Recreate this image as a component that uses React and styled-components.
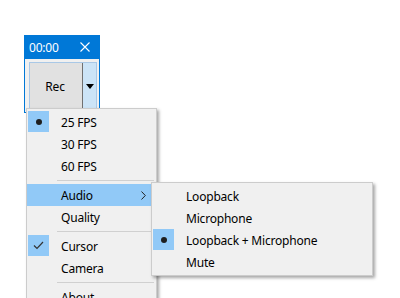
import React from 'react';
import styled, { createGlobalStyle } from 'styled-components';

const GlobalStyle = createGlobalStyle`
  html, body {
    margin: 0;
    background: #ffffff;
    font-family: 'Noto Sans', 'Liberation Sans', sans-serif;
    font-size: 12px;
    letter-spacing: -0.2px;
    color: #000;
  }
`;

const Page = styled.div`
  position: relative;
  height: 298px;
  overflow: hidden;
  padding: 35px 0 0 24px;
  box-sizing: border-box;
`;

const Window = styled.div`
  width: 76px;
`;

const TitleBar = styled.div`
  display: flex;
  align-items: center;
  justify-content: space-between;
  height: 24px;
  padding: 0 10px 0 5px;
  background: #0078d7;
  color: #fff;
  font-size: 12px;
`;

const WinBody = styled.div`
  border: 1px solid #0078d7;
  border-top: none;
  background: #f0f0f0;
  padding: 3px 2px 2px 4px;
`;

const SplitButton = styled.div`
  display: flex;
  height: 46px;
  border: 1px solid #a9c8e6;
`;

const RecButton = styled.div`
  flex: 1;
  display: flex;
  align-items: center;
  justify-content: center;
  padding-right: 2px;
  background: #e1e1e1;
  border-right: 1px solid #707070;
`;

const ArrowButton = styled.div`
  width: 13px;
  display: flex;
  align-items: center;
  justify-content: center;
  background: #cce4f7;
`;

const Menu = styled.div`
  position: absolute;
  left: ${p => p.$left}px;
  top: ${p => p.$top}px;
  width: ${p => p.$width}px;
  box-sizing: border-box;
  background: #f0f0f0;
  border: 1px solid #cccccc;
  padding: 2px 0;
  box-shadow: 2px 2px 3px rgba(0, 0, 0, 0.35);
`;

const Row = styled.div`
  position: relative;
  display: flex;
  align-items: center;
  height: 22px;
  background: ${p => (p.$hot ? '#91c9f7' : 'transparent')};
`;

const Gutter = styled.div`
  align-self: flex-start;
  width: 21px;
  height: 21px;
  margin: 0 12px 0 1px;
  display: flex;
  align-items: center;
  justify-content: center;
  background: ${p => (p.$on ? '#91c9f7' : 'transparent')};
`;

const Dot = styled.span`
  width: 6px;
  height: 6px;
  border-radius: 50%;
  background: #1e1e1e;
`;

const Label = styled.span`
  flex: 1;
  white-space: nowrap;
`;

const Chevron = styled.svg`
  margin-right: 10px;
`;

const Separator = styled.div`
  height: 1px;
  margin: 3px 2px 3px 30px;
  background: #d0d0d0;
`;

const CheckIcon = () => (
  <svg width="11" height="9" viewBox="0 0 11 9">
    <path d="M1 4.5 L4 7.5 L10 1" fill="none" stroke="#333" strokeWidth="1.2" />
  </svg>
);

const Item = ({ label, mark, hot, children, arrow }) => (
  <Row $hot={hot}>
    <Gutter $on={!!mark}>
      {mark === 'dot' && <Dot />}
      {mark === 'check' && <CheckIcon />}
    </Gutter>
    <Label>{label}</Label>
    {arrow && (
      <Chevron width="5" height="9" viewBox="0 0 5 9">
        <path d="M0.5 0.5 L4.3 4.5 L0.5 8.5" fill="none" stroke="#222" strokeWidth="1" />
      </Chevron>
    )}
    {children}
  </Row>
);

export default function App() {
  return (
    <>
      <GlobalStyle />
      <Page>
        <Window>
          <TitleBar>
            <span>00:00</span>
            <svg width="10" height="10" viewBox="0 0 10 10">
              <path d="M0.5 0.5 L9.5 9.5 M9.5 0.5 L0.5 9.5" stroke="#fff" strokeWidth="1.1" />
            </svg>
          </TitleBar>
          <WinBody>
            <SplitButton>
              <RecButton>Rec</RecButton>
              <ArrowButton>
                <svg width="8" height="5" viewBox="0 0 8 5">
                  <path d="M0 0 H8 L4 5 Z" fill="#000" />
                </svg>
              </ArrowButton>
            </SplitButton>
          </WinBody>
        </Window>

        <Menu $left={26} $top={108} $width={131}>
          <Item label="25 FPS" mark="dot" />
          <Item label="30 FPS" />
          <Item label="60 FPS" />
          <Separator />
          <Item label="Audio" hot arrow>
            <Menu $left={124} $top={-2} $width={222}>
              <Item label="Loopback" />
              <Item label="Microphone" />
              <Item label="Loopback + Microphone" mark="dot" />
              <Item label="Mute" />
            </Menu>
          </Item>
          <Item label="Quality" />
          <Separator />
          <Item label="Cursor" mark="check" />
          <Item label="Camera" />
          <Separator />
          <Item label="About" />
        </Menu>
      </Page>
    </>
  );
}
